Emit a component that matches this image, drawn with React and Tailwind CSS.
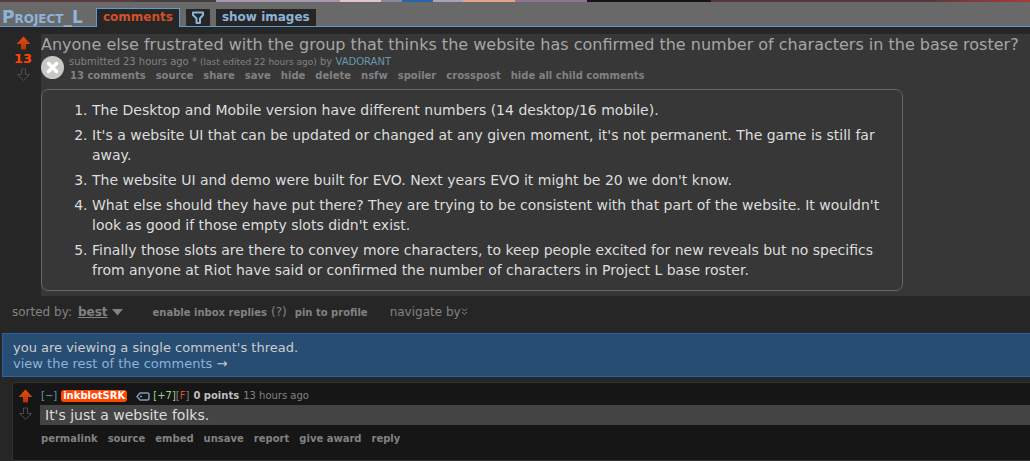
import React, { useState } from 'react';

const POINTS = [
  'The Desktop and Mobile version have different numbers (14 desktop/16 mobile).',
  "It's a website UI that can be updated or changed at any given moment, it's not permanent. The game is still far away.",
  "The website UI and demo were built for EVO. Next years EVO it might be 20 we don't know.",
  "What else should they have put there? They are trying to be consistent with that part of the website. It wouldn't look as good if those empty slots didn't exist.",
  'Finally those slots are there to convey more characters, to keep people excited for new reveals but no specifics from anyone at Riot have said or confirmed the number of characters in Project L base roster.',
];

const POST_LINKS = ['13 comments', 'source', 'share', 'save', 'hide', 'delete', 'nsfw', 'spoiler', 'crosspost', 'hide all child comments'];
const COMMENT_LINKS = ['permalink', 'source', 'embed', 'unsave', 'report', 'give award', 'reply'];

function UpArrow() {
  return (
    <svg width="15" height="14" viewBox="0 0 15 14" className="block">
      <defs>
        <linearGradient id="upvote" x1="0" y1="0" x2="0" y2="1">
          <stop offset="0" stopColor="#f04a10" />
          <stop offset="1" stopColor="#a83808" />
        </linearGradient>
      </defs>
      <path d="M7.5 0.5 L14.5 8 H10 V13.5 H5 V8 H0.5 Z" fill="url(#upvote)" />
    </svg>
  );
}

function DownArrow() {
  return (
    <svg width="15" height="14" viewBox="0 0 15 14" className="block">
      <path d="M5.5 1 H9.5 V6.5 H13.5 L7.5 12.5 L1.5 6.5 H5.5 Z" fill="none" stroke="#4c4c4c" />
    </svg>
  );
}

function Votes({ score }) {
  return (
    <div className="flex w-5 shrink-0 flex-col items-center">
      <button type="button" aria-label="upvote"><UpArrow /></button>
      {score ? (
        <span className="h-[18px] text-[13px] leading-[18px] font-bold text-[#ff4500]">{score}</span>
      ) : (
        <span className="h-1" />
      )}
      <button type="button" aria-label="downvote"><DownArrow /></button>
    </div>
  );
}

function FlatLinks({ links }) {
  return (
    <ul className="flex gap-[10px] text-[10px] leading-[14px] font-bold whitespace-nowrap text-[#828282]">
      {links.map((link) => (
        <li key={link}><a href="#">{link}</a></li>
      ))}
    </ul>
  );
}

function Banner() {
  return (
    <div className="flex h-[2px]" aria-hidden="true">
      <div className="w-[13%] bg-[#5b3b3e]" />
      <div className="w-[8%] bg-[#453d42]" />
      <div className="w-[12%] bg-[#a795ad]" />
      <div className="w-[4%] bg-[#e3c5c8]" />
      <div className="w-[2%] bg-[#8d86a0]" />
      <div className="w-[3%] bg-[#2565a8]" />
      <div className="w-[3%] bg-[#aaa0b8]" />
      <div className="w-[5%] bg-[#e3a384]" />
      <div className="w-[7%] bg-[#8c7595]" />
      <div className="w-[12%] bg-[#171416]" />
      <div className="w-[22%] bg-[#55393d]" />
      <div className="w-[9%] bg-linear-to-r from-[#64393c] to-[#a83a38]" />
    </div>
  );
}

function Header() {
  return (
    <header className="flex h-[25px] items-end border-b border-[#5f99cf] bg-[#696969] text-[12px] font-bold text-[#8cb3d9]">
      <a href="#" className="w-24 pl-[2px] text-[17px] leading-[18px] [font-variant:small-caps]">Project_L</a>
      <nav className="flex items-end gap-[6px] leading-[17px]">
        <a href="#" className="-mb-px h-[19px] border border-b-0 border-[#5f99cf] bg-[#262626] px-[6px] text-[#d2502b]">comments</a>
        <a href="#" aria-label="filter" className="flex h-[17px] w-6 items-center justify-center bg-[#262626]">
          <svg width="14" height="14" viewBox="0 0 14 14">
            <path d="M2 1.5 H12 V4 L9 7.5 V12 H5.5 V7.5 L2 4 Z" fill="none" stroke="#8cb3d9" strokeWidth="2" strokeLinejoin="round" />
          </svg>
        </a>
        <a href="#" className="h-[17px] bg-[#262626] px-[6px]">show images</a>
      </nav>
    </header>
  );
}

function Post() {
  const [open, setOpen] = useState(true);

  return (
    <article className="flex pt-[7px]">
      <div className="w-[41px] shrink-0 pt-[2px] pl-[13px]">
        <Votes score="13" />
      </div>
      <div className="min-w-0 flex-1 bg-[#373737] pb-[5px]">
        <h1 className="text-[16px] leading-[21px] whitespace-nowrap text-[#a6a6a6]">
          Anyone else frustrated with the group that thinks the website has confirmed the number of characters in the base roster?
        </h1>
        <div className="flex gap-[5px]">
          <button
            type="button"
            aria-label="toggle post text"
            aria-expanded={open}
            onClick={() => setOpen(!open)}
            className="mt-px size-[23px] shrink-0 rounded-full bg-[#c8c8c4]"
          >
            <svg width="23" height="23" viewBox="0 0 23 23">
              <path d="M7.5 7.5 L15.5 15.5 M15.5 7.5 L7.5 15.5" stroke="#fff" strokeWidth="3.5" strokeLinecap="round" />
            </svg>
          </button>
          <div>
            <p className="h-[14px] text-[10px] leading-[14px] whitespace-nowrap text-[#828282]">
              submitted 23 hours ago * <span className="text-[9px]">(last edited 22 hours ago)</span> by{' '}
              <a href="#" className="text-[#6a98af]">VADORANT</a>
            </p>
            <div className="pl-px">
              <FlatLinks links={POST_LINKS} />
            </div>
          </div>
        </div>
        {open && (
          <div className="mt-[6px] max-w-[862px] rounded-[7px] border border-[#666] px-[10px] py-[10px]">
            <ol className="list-decimal space-y-[5px] pl-10 text-[14px] leading-[20px] text-[#ddd]">
              {POINTS.map((point) => (
                <li key={point}>{point}</li>
              ))}
            </ol>
          </div>
        )}
      </div>
    </article>
  );
}

function SortBar() {
  return (
    <div className="flex h-[37px] items-center pb-[5px] pl-3 text-[12px] leading-[16px] whitespace-nowrap text-[#828282]">
      <span className="mr-[6px]">sorted by:</span>
      <button type="button" className="flex items-center gap-1">
        <span className="font-bold underline">best</span>
        <svg width="11" height="7" viewBox="0 0 11 7"><path d="M0 0 H11 L5.5 6.5 Z" fill="#828282" /></svg>
      </button>
      <div className="ml-[30px] flex items-baseline gap-1">
        <a href="#" className="text-[10px] font-bold">enable inbox replies</a>
        <span>(?)</span>
        <a href="#" className="ml-1 text-[10px] font-bold">pin to profile</a>
      </div>
      <button type="button" className="ml-[22px] flex items-center">
        navigate by
        <svg width="7" height="8" viewBox="0 0 7 8"><path d="M1 0.5 L3.5 3 L6 0.5 M1 4 L3.5 6.5 L6 4" fill="none" stroke="#828282" /></svg>
      </button>
    </div>
  );
}

function ThreadNotice() {
  return (
    <div className="ml-[2px] border border-r-0 border-[#2864a5] bg-[#274d73] pt-[6px] pb-1 pl-[10px] text-[13px] leading-[16px] text-[#ccc]">
      <p>you are viewing a single comment's thread.</p>
      <p><a href="#" className="text-[#8cb3d9]">view the rest of the comments</a> →</p>
    </div>
  );
}

function Comment() {
  return (
    <section className="mt-[5px] ml-3 flex flex-1 rounded-l-[3px] border border-r-0 border-[#333] bg-[#161616] pt-[6px] pl-[2px]">
      <div className="w-[25px] shrink-0">
        <Votes />
      </div>
      <div className="min-w-0 flex-1">
        <div className="flex h-4 items-center pb-[2px] pl-px text-[10px] leading-[12px] whitespace-nowrap text-[#828282]">
          <button type="button" className="text-[#6a98af]">[−]</button>
          <a href="#" className="ml-1 rounded-[3px] bg-[#ff4500] px-[2px] font-bold text-white">inkblotSRK</a>
          <svg width="14" height="9" viewBox="0 0 14 9" className="mr-[3px] ml-[9px]">
            <path d="M4 1 H11.5 Q13 1 13 2.5 V6.5 Q13 8 11.5 8 H4 L1 4.5 Z" fill="none" stroke="#7b9dc0" strokeWidth="1.5" />
            <path d="M4 4.5 H6" stroke="#7b9dc0" strokeWidth="1.5" />
          </svg>
          <span className="text-[#9fd08f]">[+7]</span>
          <span>[<span className="text-[#d2502b]">F</span>]</span>
          <span className="ml-1 font-bold text-[#bfbfbf]">0 points</span>
          <time className="ml-1">13 hours ago</time>
        </div>
        <p className="bg-[#444] pl-[5px] text-[14px] leading-[20px] text-[#ddd]">It's just a website folks.</p>
        <div className="pt-[7px] pl-px">
          <FlatLinks links={COMMENT_LINKS} />
        </div>
      </div>
    </section>
  );
}

export default function App() {
  return (
    <div className="flex min-h-screen flex-col overflow-hidden bg-[#262626] font-['Verdana','DejaVu_Sans',sans-serif]">
      <Banner />
      <Header />
      <Post />
      <SortBar />
      <ThreadNotice />
      <Comment />
    </div>
  );
}
